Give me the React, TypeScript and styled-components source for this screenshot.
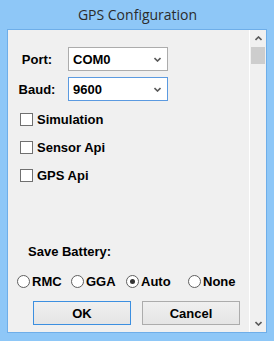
import styled, { createGlobalStyle } from 'styled-components';

const GlobalStyle = createGlobalStyle`
  html, body {
    margin: 0;
    padding: 0;
    background: #8ec7f7;
  }
`;

const Window = styled.div`
  background: #8ec7f7;
  display: flex;
  flex-direction: column;
  height: 341px;
  width: 274px;
`;

const TitleBar = styled.div`
  align-items: center;
  color: #2b2b2b;
  display: flex;
  font-family: 'Open Sans', 'Noto Sans', sans-serif;
  font-size: 14px;
  height: 29px;
  justify-content: center;
  padding-left: 1px;
`;

const Frame = styled.div`
  background: #f0f0f0;
  border: 1px solid #6eaee9;
  display: flex;
  height: 304px;
  margin: 0 7px;
  box-sizing: border-box;
`;

const Content = styled.div`
  display: flex;
  flex: 1;
  flex-direction: column;
  font-family: 'Liberation Sans', Arial, sans-serif;
  font-size: 13px;
  font-weight: bold;
  color: #000;
  padding-top: 17px;
`;

const FieldRow = styled.div`
  align-items: center;
  display: flex;
  gap: 8px;
  height: 24px;
  margin-bottom: 6px;
  padding-left: 6px;
`;

const FieldLabel = styled.div`
  text-align: center;
  width: 46px;
`;

const Combo = styled.div<{ $focused?: boolean }>`
  align-items: center;
  background: #fff;
  border: 1px solid ${({ $focused }) => ($focused ? '#5b9ae0' : '#acacac')};
  box-sizing: border-box;
  display: flex;
  height: 24px;
  justify-content: space-between;
  padding: 0 6px 0 4px;
  width: 100px;
`;

const CheckList = styled.div`
  display: flex;
  flex-direction: column;
  gap: 15px;
  margin-top: 6px;
  padding-left: 12px;
`;

const CheckRow = styled.label`
  align-items: center;
  display: flex;
  gap: 4px;
  height: 13px;
`;

const Box = styled.span`
  background: #fff;
  border: 1px solid #707070;
  box-sizing: border-box;
  display: inline-block;
  height: 13px;
  width: 13px;
`;

const SectionLabel = styled.div`
  line-height: 16px;
  margin-top: 62px;
  padding-left: 20px;
`;

const RadioRow = styled.div`
  align-items: center;
  display: flex;
  height: 13px;
  margin-top: 15px;
  padding-left: 9px;
`;

const RadioItem = styled.label<{ $width: number }>`
  align-items: center;
  display: flex;
  gap: 2px;
  width: ${({ $width }) => $width}px;
`;

const Circle = styled.span<{ $checked?: boolean }>`
  align-items: center;
  background: #fff;
  border: 1px solid #5f5f5f;
  border-radius: 50%;
  box-sizing: border-box;
  display: inline-flex;
  height: 13px;
  justify-content: center;
  width: 13px;

  &::after {
    background: #333;
    border-radius: 50%;
    content: '';
    display: ${({ $checked }) => ($checked ? 'block' : 'none')};
    height: 5px;
    width: 5px;
  }
`;

const ButtonRow = styled.div`
  display: flex;
  gap: 11px;
  margin-top: 13px;
  padding-left: 25px;
`;

const Button = styled.div<{ $default?: boolean }>`
  align-items: center;
  background: linear-gradient(#f0f0f0, #e5e5e5);
  border: 1px solid ${({ $default }) => ($default ? '#3c8fe0' : '#acacac')};
  box-sizing: border-box;
  display: flex;
  height: 24px;
  justify-content: center;
  width: 98px;
`;

const Scrollbar = styled.div`
  align-items: center;
  border-left: 1px solid #fff;
  display: flex;
  flex-direction: column;
  width: 16px;
`;

const ScrollArrow = styled.div`
  align-items: center;
  display: flex;
  height: 17px;
  justify-content: center;
  width: 100%;
`;

const Track = styled.div`
  flex: 1;
  width: 100%;
`;

const Thumb = styled.div`
  background: #cdcdcd;
  height: 17px;
  margin: 0 1px;
`;

const Chevron = ({ up, color = '#5a5a5a' }: { up?: boolean; color?: string }) => (
  <svg width="7" height="5" viewBox="0 0 7 5">
    <polyline
      points={up ? '0.5,4 3.5,1 6.5,4' : '0.5,1 3.5,4 6.5,1'}
      fill="none"
      stroke={color}
      strokeWidth="1.6"
    />
  </svg>
);

const checks = ['Simulation', 'Sensor Api', 'GPS Api'];

const radios = [
  { label: 'RMC', width: 54 },
  { label: 'GGA', width: 55 },
  { label: 'Auto', width: 62, checked: true },
  { label: 'None', width: 60 },
];

export default function App() {
  return (
    <>
      <GlobalStyle />
      <Window>
        <TitleBar>GPS Configuration</TitleBar>
        <Frame>
          <Content>
            <FieldRow>
              <FieldLabel>Port:</FieldLabel>
              <Combo>
                COM0
                <Chevron />
              </Combo>
            </FieldRow>
            <FieldRow>
              <FieldLabel>Baud:</FieldLabel>
              <Combo $focused>
                9600
                <Chevron />
              </Combo>
            </FieldRow>
            <CheckList>
              {checks.map((c) => (
                <CheckRow key={c}>
                  <Box />
                  {c}
                </CheckRow>
              ))}
            </CheckList>
            <SectionLabel>Save Battery:</SectionLabel>
            <RadioRow>
              {radios.map((r) => (
                <RadioItem key={r.label} $width={r.width}>
                  <Circle $checked={r.checked} />
                  {r.label}
                </RadioItem>
              ))}
            </RadioRow>
            <ButtonRow>
              <Button $default>OK</Button>
              <Button>Cancel</Button>
            </ButtonRow>
          </Content>
          <Scrollbar>
            <ScrollArrow>
              <Chevron up />
            </ScrollArrow>
            <Track>
              <Thumb />
            </Track>
            <ScrollArrow>
              <Chevron />
            </ScrollArrow>
          </Scrollbar>
        </Frame>
      </Window>
    </>
  );
}
